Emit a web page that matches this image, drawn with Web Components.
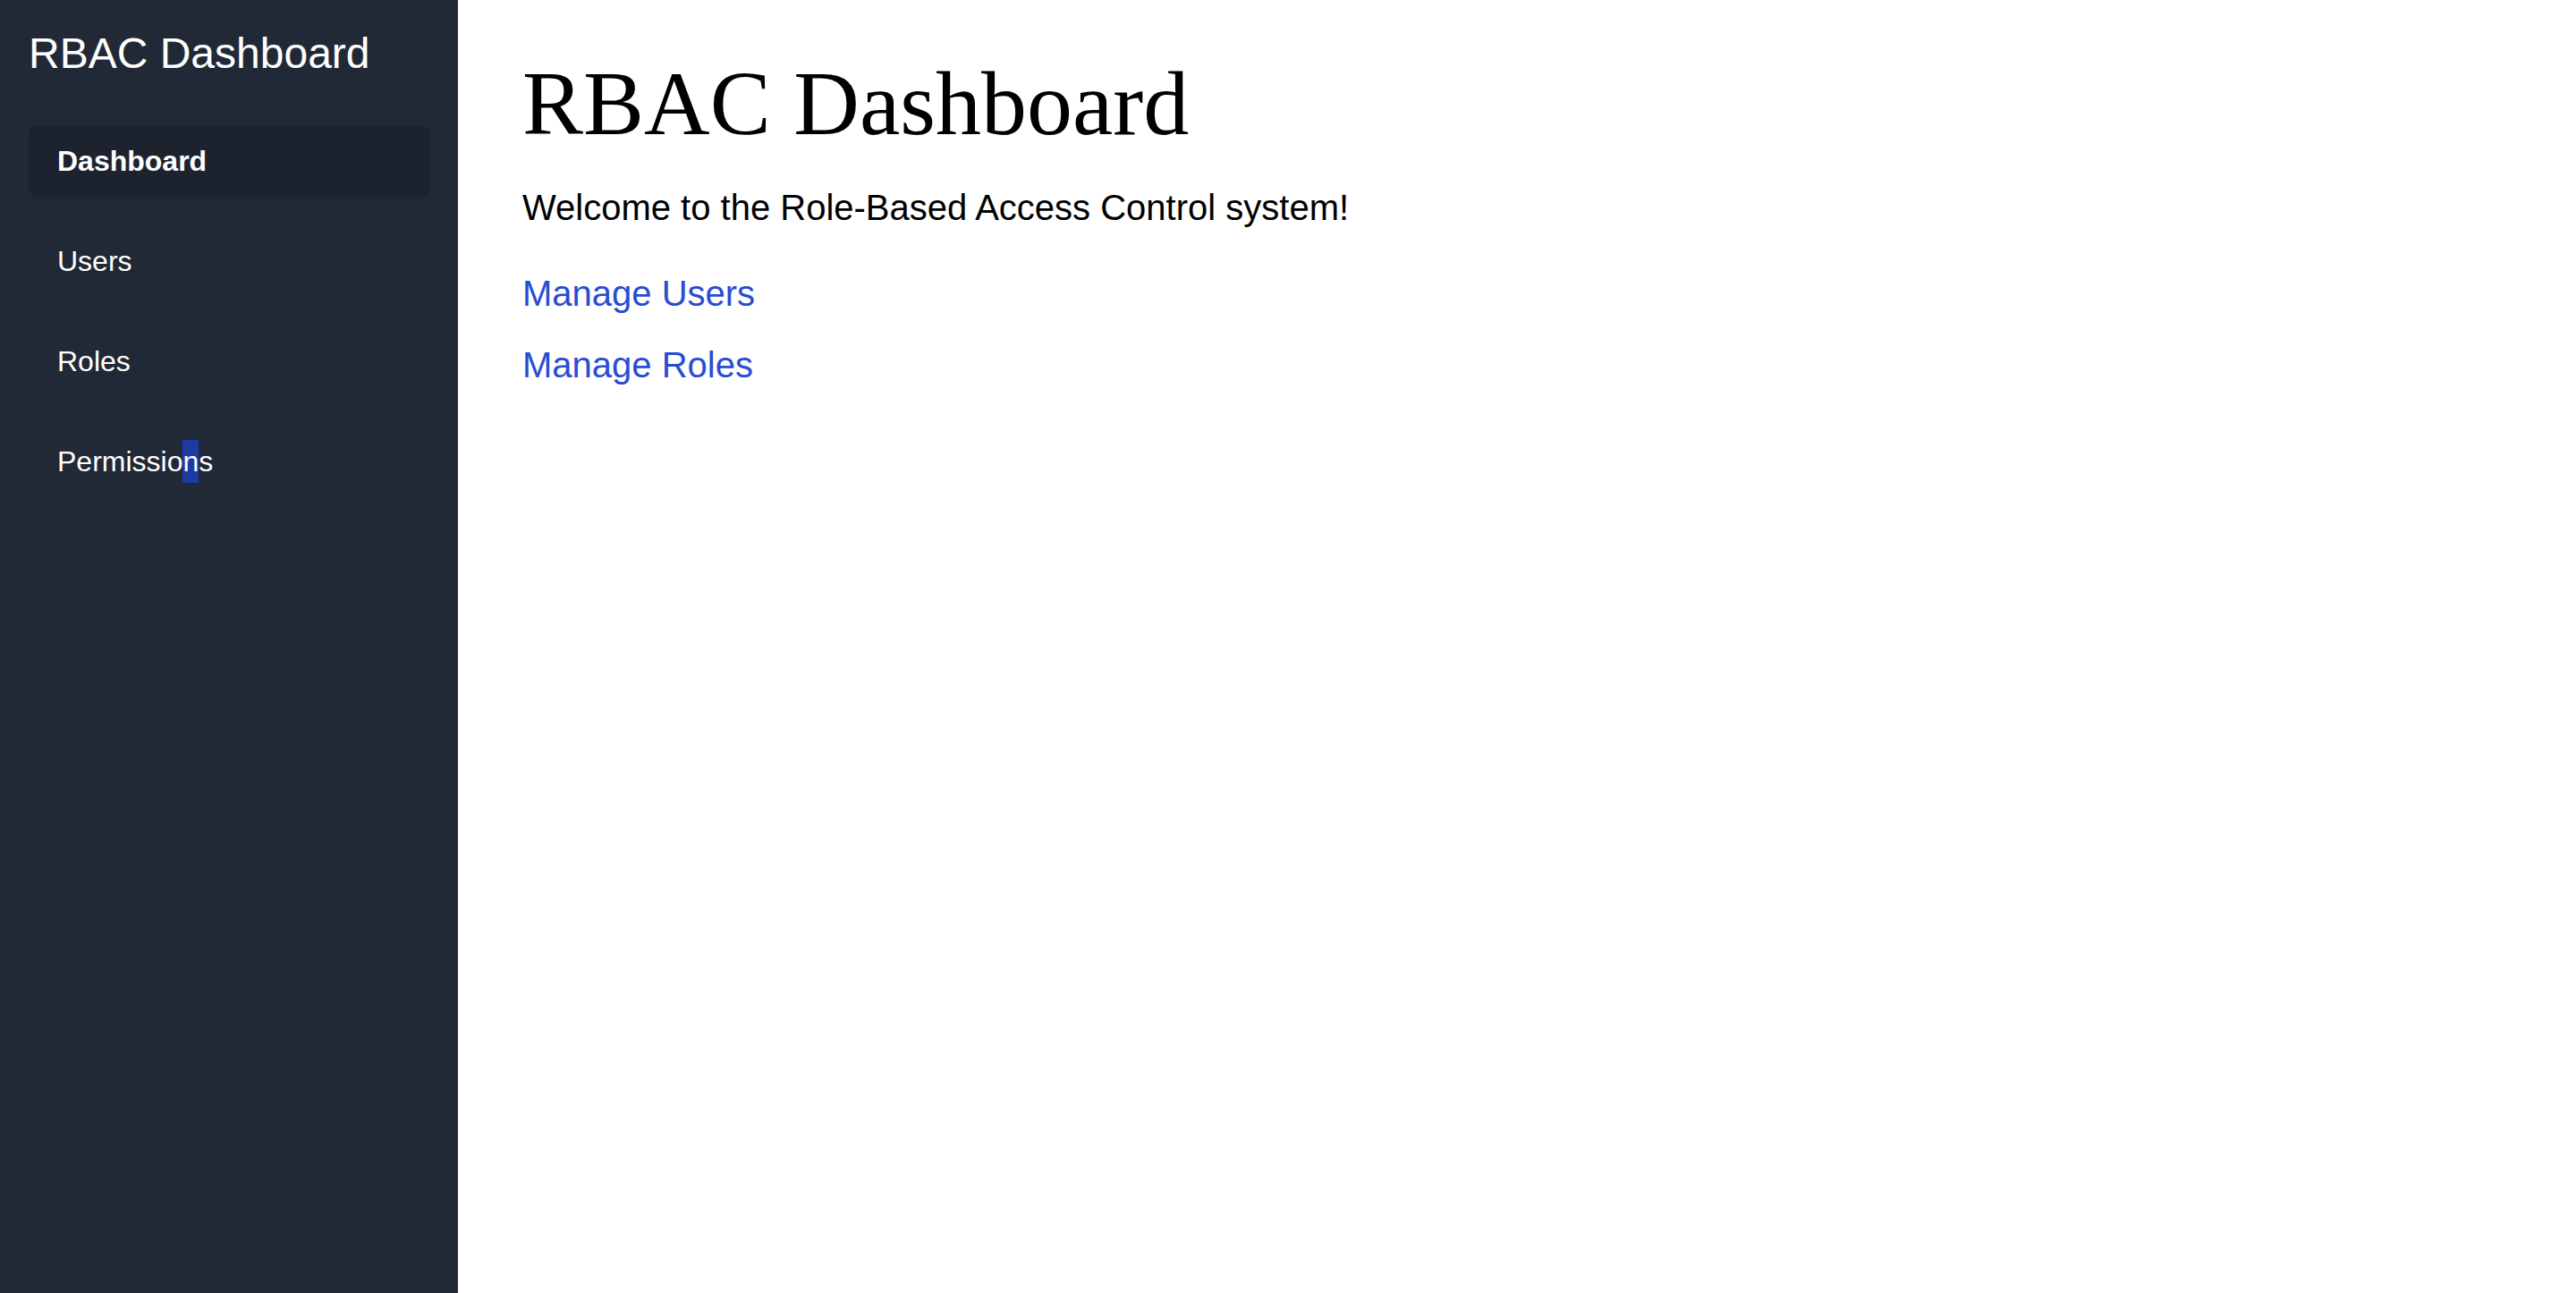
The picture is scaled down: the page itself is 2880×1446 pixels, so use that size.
<!DOCTYPE html>
<html lang="en">
<head>
<meta charset="utf-8">
<meta name="viewport" content="width=device-width, initial-scale=1">
<title>RBAC Dashboard</title>
<style>
  body { margin: 0; background: #fff; color: #000; font-family: Arial, "Liberation Sans", sans-serif; }
</style>
</head>
<body>
<rbac-app>
  <rbac-sidebar slot="sidebar" heading="RBAC Dashboard">
    <rbac-nav-item href="#dashboard" active>Dashboard</rbac-nav-item>
    <rbac-nav-item href="#users">Users</rbac-nav-item>
    <rbac-nav-item href="#roles">Roles</rbac-nav-item>
    <rbac-nav-item href="#permissions">Permissio<rbac-highlight>n</rbac-highlight>s</rbac-nav-item>
  </rbac-sidebar>
  <rbac-page heading="RBAC Dashboard">
    <span slot="intro">Welcome to the Role-Based Access Control system!</span>
    <rbac-link href="#users">Manage Users</rbac-link>
    <rbac-link href="#roles">Manage Roles</rbac-link>
  </rbac-page>
</rbac-app>
<script>
  function define(name, markup, setup) {
    const template = document.createElement('template');
    template.innerHTML = markup.trim();
    customElements.define(name, class extends HTMLElement {
      constructor() {
        super();
        this.attachShadow({ mode: 'open' }).append(template.content.cloneNode(true));
      }
      connectedCallback() {
        if (setup) setup(this, this.shadowRoot);
      }
    });
  }

  define('rbac-app', `
    <style>
      :host { display: flex; min-height: 100vh; }
      ::slotted([slot=sidebar]) { flex: 0 0 512px; }
      main { flex: 1; min-width: 0; }
    </style>
    <slot name="sidebar"></slot>
    <main><slot></slot></main>`);

  define('rbac-sidebar', `
    <style>
      :host { display: block; box-sizing: border-box; padding: 32px; background: #222936; color: #fff; }
      h2 { margin: 0 0 52px; font-size: 48px; line-height: 56px; font-weight: 400; }
      nav { display: flex; flex-direction: column; gap: 32px; }
    </style>
    <h2></h2>
    <nav aria-label="Main"><slot></slot></nav>`,
    (el, root) => { root.querySelector('h2').textContent = el.getAttribute('heading'); });

  define('rbac-nav-item', `
    <style>
      :host { display: block; }
      a { display: block; padding: 16px 32px; border-radius: 8px; color: inherit; font-size: 32px; line-height: 48px; text-decoration: none; }
      :host([active]) a { background: #1d232e; font-weight: 700; }
    </style>
    <a><slot></slot></a>`,
    (el, root) => {
      const a = root.querySelector('a');
      a.href = el.getAttribute('href');
      if (el.hasAttribute('active')) a.setAttribute('aria-current', 'page');
    });

  define('rbac-highlight', `<style>
      :host { display: inline; padding: 6px 0; background: #1d3aa5; }
    </style><slot></slot>`);

  define('rbac-page', `
    <style>
      :host { display: block; padding: 56px 72px; font-size: 40px; line-height: 60px; }
      h1 { margin: 0 0 26px; font-family: Georgia, "Liberation Serif", serif; font-size: 102px; line-height: 120px; font-weight: 400; }
      p { margin: 0 0 36px; }
      .links { display: flex; flex-direction: column; align-items: flex-start; gap: 20px; }
    </style>
    <h1></h1>
    <p><slot name="intro"></slot></p>
    <div class="links"><slot></slot></div>`,
    (el, root) => { root.querySelector('h1').textContent = el.getAttribute('heading'); });

  define('rbac-link', `
    <style>
      :host { display: block; }
      a { color: #284dd1; text-decoration: none; }
      a:hover { text-decoration: underline; }
    </style>
    <a><slot></slot></a>`,
    (el, root) => { root.querySelector('a').href = el.getAttribute('href'); });
</script>
</body>
</html>
